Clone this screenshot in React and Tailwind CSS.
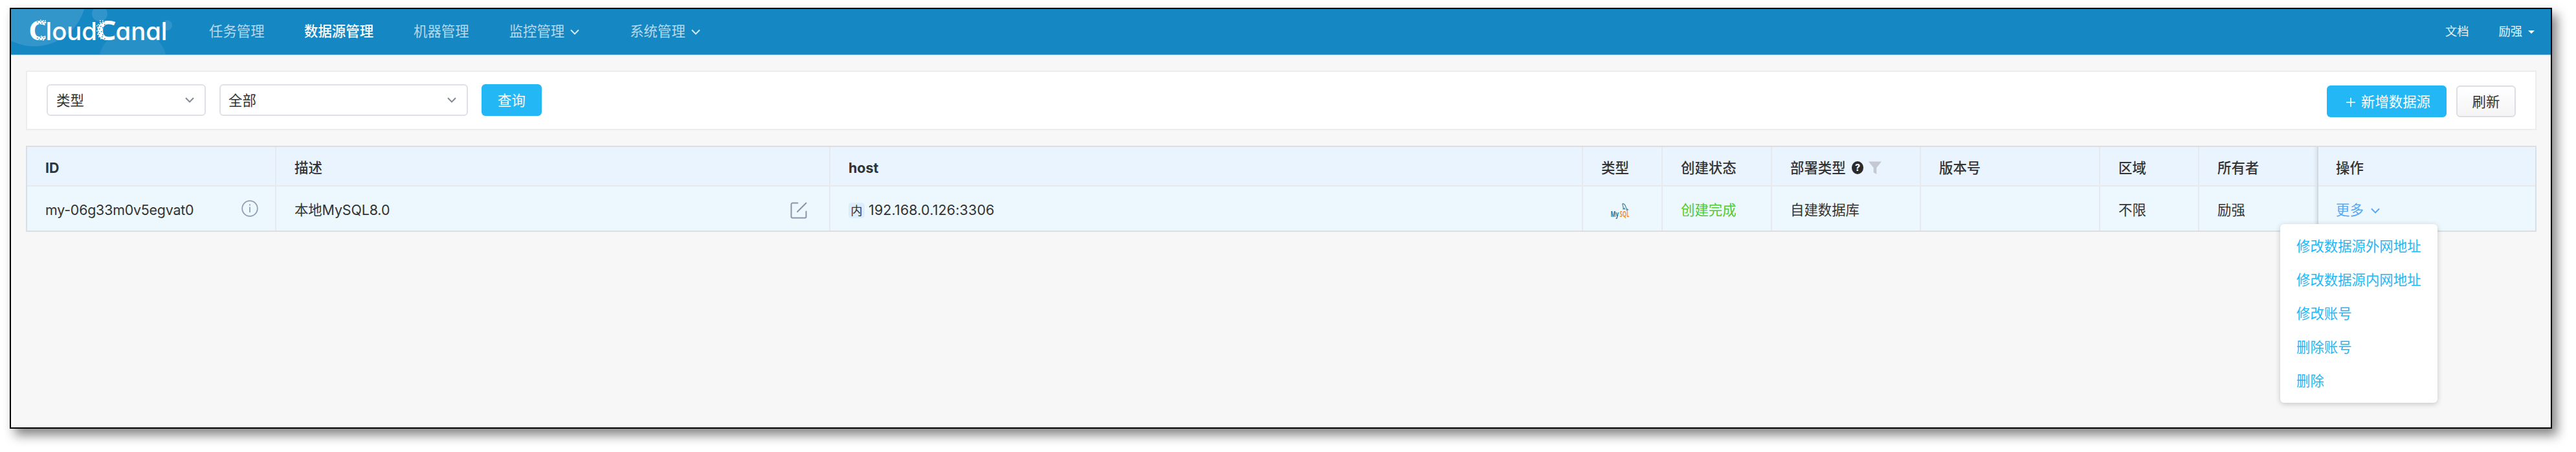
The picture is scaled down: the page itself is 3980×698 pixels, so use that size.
import React from "react";

const NAV = [
  { label: "任务管理", gap: "ml-[46px]" },
  { label: "数据源管理", gap: "ml-[61.500px]", active: true },
  { label: "机器管理", gap: "ml-[62px]" },
  { label: "监控管理", gap: "ml-[62px]", menu: true },
  { label: "系统管理", gap: "ml-[78px]", menu: true },
];

const MENU = ["修改数据源外网地址", "修改数据源内网地址", "修改账号", "删除账号", "删除"];

function Chevron({ className }) {
  return (
    <svg viewBox="0 0 14 9" className={className} fill="none" stroke="currentColor" strokeWidth="2">
      <path d="M1 1.2 7 7.4 13 1.2" />
    </svg>
  );
}

const BLUE_SPECKS = [
  [57, 33], [60, 36], [62, 32], [64, 35], [67, 33], [69, 36],
  [57, 58], [60, 60], [62, 57], [65, 60], [67, 57], [69, 60],
  [157, 35], [160, 33], [155, 40], [158, 42], [153, 44], [156, 48], [153, 51], [158, 53], [157, 56], [161, 59], [161, 37], [151, 48],
];
const WHITE_SPECKS = [
  [62, 30.500], [66, 31], [69, 31], [66, 36], [63, 55], [66, 61],
  [151, 37], [154, 34], [150, 42], [149, 47], [150, 52], [152, 56], [155, 59], [149, 39], [154, 31], [158, 31],
];

function Logo() {
  return (
    <svg viewBox="17 14 260 70" className="h-[70px] w-[260px] shrink-0">
      <g fill="#ffffff">
        <circle cx="53" cy="-9" r="80.5" opacity="0.13" />
        <circle cx="154" cy="21" r="12" opacity="0.12" />
        <circle cx="258" cy="39" r="8" opacity="0.11" />
        <circle cx="205" cy="98" r="53" opacity="0.08" />
      </g>
      <g fill="#ffffff" fontFamily="Inter, 'Liberation Sans', sans-serif" fontWeight="500" style={{ fontFeatureSettings: '"cv11"' }}>
        <text x="44" y="62" fontSize="42" fontWeight="700" fontFamily="'Open Sans', sans-serif" textLength="29" lengthAdjust="spacingAndGlyphs">C</text>
        <text x="70.500" y="62" fontSize="38" textLength="79.500" lengthAdjust="spacingAndGlyphs">loud</text>
        <text x="148" y="62" fontSize="42" fontWeight="700" fontFamily="'Open Sans', sans-serif" textLength="32" lengthAdjust="spacingAndGlyphs">C</text>
        <text x="178.500" y="62" fontSize="38" textLength="80" lengthAdjust="spacingAndGlyphs">anal</text>
      </g>
      <g fill="#1587c3">
        {BLUE_SPECKS.map(([x, y]) => (
          <rect key={x + "-" + y} x={x} y={y} width="1.5" height="1.5" />
        ))}
      </g>
      <g fill="#ffffff">
        {WHITE_SPECKS.map(([x, y]) => (
          <rect key={x + "-" + y} x={x} y={y} width="1.6" height="1.6" />
        ))}
      </g>
    </svg>
  );
}

function MySqlIcon() {
  return (
    <svg viewBox="0 0 36 32" className="mb-[3px] ml-[14px] h-[32px] w-[36px]">
      <path
        d="M19 8.300c2.300.3 4.200 2.300 5 5.400l.5 2 2.600 2-2 .1 1.300 1.800M19 8.300c-.6 1.500.2 3.200.8 4.700l.3 4 1.500-1.500 1.100 2.200"
        fill="none"
        stroke="#3f87a6"
        strokeWidth="1.200"
      />
      <g fontFamily="'Open Sans', sans-serif" fontWeight="700" fontSize="12">
        <text x="0.500" y="28.500" fill="#1f7196" textLength="12.500" lengthAdjust="spacingAndGlyphs">My</text>
        <text x="14.500" y="28.500" fill="#f0952b" textLength="15" lengthAdjust="spacingAndGlyphs">SQL</text>
      </g>
    </svg>
  );
}

function Head({ children, fixed, latin }) {
  return (
    <div
      className={
        "flex h-[61px] items-center border-b-2 border-b-[#e6eaee] border-r-[#e6eaee] bg-[#e9f4fe] pl-[28px] pt-[4px] " +
        (latin ? "font-bold " : "font-medium ") +
        (fixed ? "" : "border-r-2")
      }
    >
      {children}
    </div>
  );
}

function Cell({ children, fixed }) {
  return (
    <div className={"flex h-[68px] items-center border-[#e6eaee] bg-[#ecf8fe] pl-[28px] pt-[3px] " + (fixed ? "" : "border-r-2")}>
      {children}
    </div>
  );
}

export default function App() {
  return (
    <div className="h-[698px] w-[3980px] overflow-hidden bg-white pl-[15px] pt-[12px] font-['Inter','Noto_Sans_CJK_SC',sans-serif] text-[21.4px] leading-[32px] text-[#333333]">
      <div className="h-[650px] w-[3928px] border-2 border-black bg-[#f7f7f7] shadow-[8px_10px_16px_rgba(0,0,0,0.48)]">
        <header className="flex h-[71px] items-center border-b border-[#6fb5dc] bg-[#1587c3]">
          <Logo />
          <nav className="flex items-center pb-[2px]">
            {NAV.map((n) => (
              <div
                key={n.label}
                className={
                  n.gap + " flex items-center whitespace-nowrap " + (n.active ? "font-medium text-white" : "text-[#b5d9ed]")
                }
              >
                {n.label}
                {n.menu && <Chevron className="ml-[9px] mt-[3px] h-[9px] w-[14px] text-[#d5eaf5]" />}
              </div>
            ))}
          </nav>
          <div className="ml-auto mr-[25px] flex items-center pb-[2px] text-[18.300px] text-[#e8f3f9]">
            <span>文档</span>
            <span className="ml-[46px]">励强</span>
            <svg viewBox="0 0 10 5" className="ml-[9px] mt-[2px] h-[5px] w-[10px]">
              <path d="M0 0h10L5 5z" fill="#ffffff" />
            </svg>
          </div>
        </header>

        <main className="px-[23px] pt-[24px]">
          <section className="flex h-[92px] w-[3879px] items-start border-2 border-[#ededed] bg-white pl-[30px] pt-[19px]">
            <div className="flex h-[49px] w-[246px] items-center justify-between rounded-[6px] border-2 border-[#dfe1e7] bg-white pl-[13px] pr-[16px]">
              类型
              <Chevron className="h-[9px] w-[14px] text-[#808695]" />
            </div>
            <div className="ml-[21px] flex h-[49px] w-[384px] items-center justify-between rounded-[6px] border-2 border-[#dfe1e7] bg-white pl-[12px] pr-[16px]">
              全部
              <Chevron className="h-[9px] w-[14px] text-[#808695]" />
            </div>
            <button className="ml-[21px] h-[49px] w-[93px] rounded-[6px] bg-[#24b7f5] text-white">查询</button>
            <div className="ml-auto mr-[30px] flex pt-[2px]">
              <button className="flex h-[49px] w-[185px] items-center rounded-[6px] bg-[#24b7f5] pl-[30px] text-white">
                <svg viewBox="0 0 14 14" className="mt-[2px] h-[14px] w-[14px]" stroke="currentColor" strokeWidth="1.600">
                  <path d="M7 0v14M0 7h14" />
                </svg>
                <span className="ml-[9px]">新增数据源</span>
              </button>
              <button className="ml-[15px] h-[49px] w-[92px] rounded-[6px] border-2 border-[#dcdee4] bg-linear-to-b from-white to-[#f4f4f4]">
                刷新
              </button>
            </div>
          </section>

          <section className="relative mt-[24px] w-[3879px] border-2 border-[#dadfe5]">
            <div className="grid grid-cols-[385px_856px_1163px_123px_169px_230px_277px_153px_183px_1fr]">
              <Head latin>ID</Head>
              <Head>描述</Head>
              <Head latin>host</Head>
              <Head>类型</Head>
              <Head>创建状态</Head>
              <Head>
                部署类型
                <svg viewBox="0 0 18 20" className="ml-[9px] h-[20px] w-[18px]">
                  <ellipse cx="9" cy="10" rx="9" ry="10" fill="#2b2b2b" />
                  <text x="9" y="15" textAnchor="middle" fontSize="14" fontWeight="800" fill="#ffffff">?</text>
                </svg>
                <svg viewBox="0 0 20 20" className="ml-[8px] h-[20px] w-[20px]">
                  <path d="M0 .500h20l-7.700 9.500v10l-4.600-2.800V10z" fill="#c3c8d1" />
                </svg>
              </Head>
              <Head>版本号</Head>
              <Head>区域</Head>
              <Head fixed>所有者</Head>
              <Head fixed>操作</Head>

              <Cell>
                <span className="w-[228px] whitespace-nowrap tracking-[-0.2px]">my-06g33m0v5egvat0</span>
                <svg viewBox="0 0 26 26" className="mb-[3px] ml-[75px] h-[26px] w-[26px]" fill="none" stroke="#8f9bb0" strokeWidth="1.700">
                  <circle cx="13" cy="13" r="11.800" />
                  <path d="M13 10.500V19M13 6.200v2.200" />
                </svg>
              </Cell>
              <Cell>
                <span className="tracking-[-0.100px]">本地MySQL8.0</span>
                <svg viewBox="0 0 26 26" className="ml-auto mr-[34px] mt-[2px] h-[26px] w-[26px]" fill="none" stroke="#8c93a8" strokeWidth="2" strokeLinecap="round" strokeLinejoin="round">
                  <path d="M11.500 1.500H3.500a2 2 0 0 0-2 2V22.500a2 2 0 0 0 2 2H22.500a2 2 0 0 0 2-2V14.500M24.500 1.500 11 15" />
                </svg>
              </Cell>
              <Cell>
                <span className="mt-[2px] flex h-[24px] w-[25px] items-center justify-center rounded-[5px] bg-[#dceefd] text-[18.300px]">内</span>
                <span className="ml-[6px] tracking-[0.180px]">192.168.0.126:3306</span>
              </Cell>
              <Cell>
                <MySqlIcon />
              </Cell>
              <Cell>
                <span className="text-[#52c932]">创建完成</span>
              </Cell>
              <Cell>自建数据库</Cell>
              <Cell />
              <Cell>不限</Cell>
              <Cell fixed>励强</Cell>
              <Cell fixed>
                <span className="text-[#5ba7f0]">更多</span>
                <Chevron className="ml-[11px] mt-[3px] h-[9px] w-[14px] text-[#5ba7f0]" />
              </Cell>
            </div>
            <div className="absolute right-[335px] top-0 h-[129px] w-[8px] border-r-2 border-[#d3d9df] bg-linear-to-r from-transparent to-[#d9e5ef]" />
            <ul className="absolute right-[151px] top-[119px] h-[276px] w-[243px] rounded-[6px] bg-white py-[8px] shadow-[0_2px_9px_rgba(0,0,0,0.2)]">
              {MENU.map((m) => (
                <li key={m} className="flex h-[52px] items-center whitespace-nowrap pl-[25px] text-[#24b7f5]">
                  {m}
                </li>
              ))}
            </ul>
          </section>
        </main>
      </div>
    </div>
  );
}
